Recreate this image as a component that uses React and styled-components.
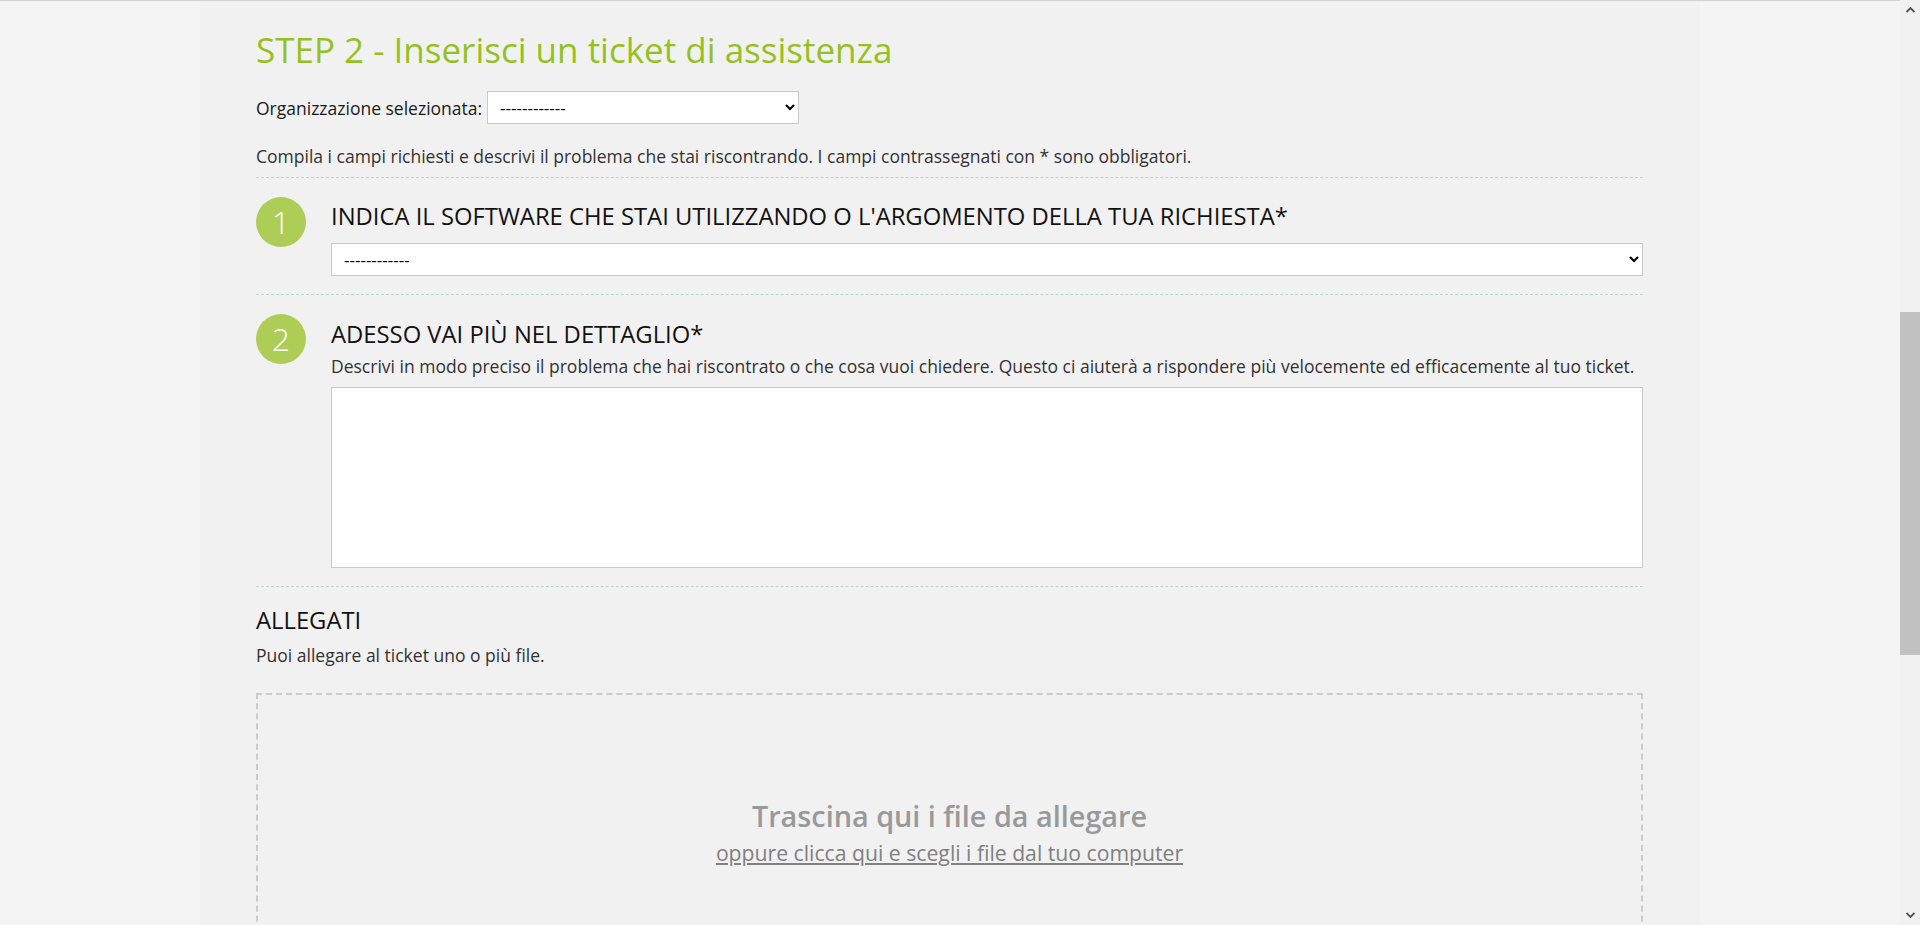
import React from 'react'
import styled, { createGlobalStyle } from 'styled-components'

const GlobalStyle = createGlobalStyle`
  html, body {
    margin: 0;
    padding: 0;
    height: 925px;
    overflow: hidden;
    background: #f4f4f4;
    font-family: "Open Sans", "Noto Sans", sans-serif;
  }
  * {
    box-sizing: border-box;
  }
`

const Page = styled.div`
  display: flex;
  height: 925px;
  overflow: hidden;
`

const Main = styled.div`
  flex: 1;
  border-top: 1px solid #d2d2d2;
  overflow: hidden;
`

const Container = styled.div`
  width: 1500px;
  margin: 0 auto;
  min-height: 100%;
  background: #f1f1f1;
  padding: 27px 57px 0 56px;
`

const Title = styled.h1`
  margin: 0;
  font-size: 35px;
  line-height: 44px;
  font-weight: 400;
  color: #95c11f;
`

const OrgRow = styled.div`
  display: flex;
  align-items: center;
  gap: 5px;
  margin-top: 19px;
  font-size: 17.5px;
  color: #1a1a1a;
`

const Select = styled.select`
  display: block;
  width: ${({ $width }) => $width || '100%'};
  height: 33px;
  margin: 0;
  padding: 0 8px;
  border: 1px solid #c9c9c9;
  border-radius: 0;
  background: #fff;
  color: #000;
  font-family: "Open Sans", sans-serif;
  font-size: 17px;
`

const Intro = styled.p`
  margin: 20px 0 0;
  padding-bottom: 9px;
  font-size: 17.5px;
  line-height: 24px;
  color: #333;
  border-bottom: 1px dashed #b6d5cd;
`

const Step = styled.section`
  display: grid;
  grid-template-columns: 50px 1fr;
  column-gap: 25px;
  padding: 19px 0 18px;
  border-bottom: 1px dashed #b6d5cd;
`

const Badge = styled.div`
  width: 50px;
  height: 50px;
  border-radius: 50%;
  background: #aecd57;
  color: #fff;
  font-size: 32px;
  font-weight: 300;
  line-height: 50px;
  text-align: center;
`

const StepBody = styled.div`
  display: flex;
  flex-direction: column;
`

const Heading = styled.h2`
  margin: ${({ $top }) => $top || 0}px 0 0;
  font-size: 23.8px;
  line-height: 30px;
  font-weight: 400;
  color: #111;
  text-transform: uppercase;
`

const Help = styled.p`
  margin: ${({ $top }) => $top || 0}px 0 0;
  font-size: 17.5px;
  line-height: 24px;
  color: #333;
`

const Field = styled.div`
  margin-top: ${({ $top }) => $top}px;
`

const TextArea = styled.textarea`
  display: block;
  width: 100%;
  height: 181px;
  margin-top: 9px;
  border: 1px solid #c9c9c9;
  background: #fff;
  resize: none;
  font-family: "Open Sans", sans-serif;
`

const Attachments = styled.section`
  padding-top: 18px;
`

const DropZone = styled.div`
  display: flex;
  flex-direction: column;
  align-items: center;
  height: 320px;
  margin-top: 26px;
  padding-top: 103px;
  border: 2px dashed #cbcbcb;
`

const DropTitle = styled.div`
  font-size: 28.8px;
  line-height: 36px;
  font-weight: 600;
  color: #999;
`

const DropLink = styled.a`
  margin-top: 5px;
  font-size: 21.2px;
  line-height: 28px;
  color: #808080;
  text-decoration: underline;
  cursor: pointer;
`

const Scrollbar = styled.div`
  display: flex;
  flex-direction: column;
  width: 20px;
  background: #f1f1f1;
`

const ScrollArrow = styled.div`
  display: flex;
  align-items: center;
  justify-content: center;
  height: 20px;
  margin-top: ${({ $down }) => ($down ? 'auto' : '0')};
  color: #505050;
`

const Thumb = styled.div`
  height: 343px;
  margin-top: 292px;
  background: #c1c1c1;
`

const Arrow = ({ down }) => (
  <svg width="9" height="6" viewBox="0 0 9 6">
    <path
      d={down ? 'M0.5 1 L4.5 5 L8.5 1' : 'M0.5 5 L4.5 1 L8.5 5'}
      fill="none"
      stroke="currentColor"
      strokeWidth="1.8"
    />
  </svg>
)

const App = () => (
  <>
    <GlobalStyle />
    <Page>
      <Main>
        <Container>
          <Title>STEP 2 - Inserisci un ticket di assistenza</Title>
          <OrgRow>
            <label htmlFor="org">Organizzazione selezionata:</label>
            <Select id="org" $width="312px">
              <option>------------</option>
            </Select>
          </OrgRow>
          <Intro>
            Compila i campi richiesti e descrivi il problema che stai riscontrando. I campi
            contrassegnati con * sono obbligatori.
          </Intro>

          <Step>
            <Badge>1</Badge>
            <StepBody>
              <Heading $top={4}>
                Indica il software che stai utilizzando o l'argomento della tua richiesta*
              </Heading>
              <Field $top={12}>
                <Select>
                  <option>------------</option>
                </Select>
              </Field>
            </StepBody>
          </Step>

          <Step>
            <Badge>2</Badge>
            <StepBody>
              <Heading $top={5}>Adesso vai più nel dettaglio*</Heading>
              <Help $top={5}>
                Descrivi in modo preciso il problema che hai riscontrato o che cosa vuoi chiedere.
                Questo ci aiuterà a rispondere più velocemente ed efficacemente al tuo ticket.
              </Help>
              <TextArea />
            </StepBody>
          </Step>

          <Attachments>
            <Heading $top={0}>Allegati</Heading>
            <Help $top={8}>Puoi allegare al ticket uno o più file.</Help>
            <DropZone>
              <DropTitle>Trascina qui i file da allegare</DropTitle>
              <DropLink>oppure clicca qui e scegli i file dal tuo computer</DropLink>
            </DropZone>
          </Attachments>
        </Container>
      </Main>
      <Scrollbar>
        <ScrollArrow>
          <Arrow />
        </ScrollArrow>
        <Thumb />
        <ScrollArrow $down>
          <Arrow down />
        </ScrollArrow>
      </Scrollbar>
    </Page>
  </>
)

export default App
